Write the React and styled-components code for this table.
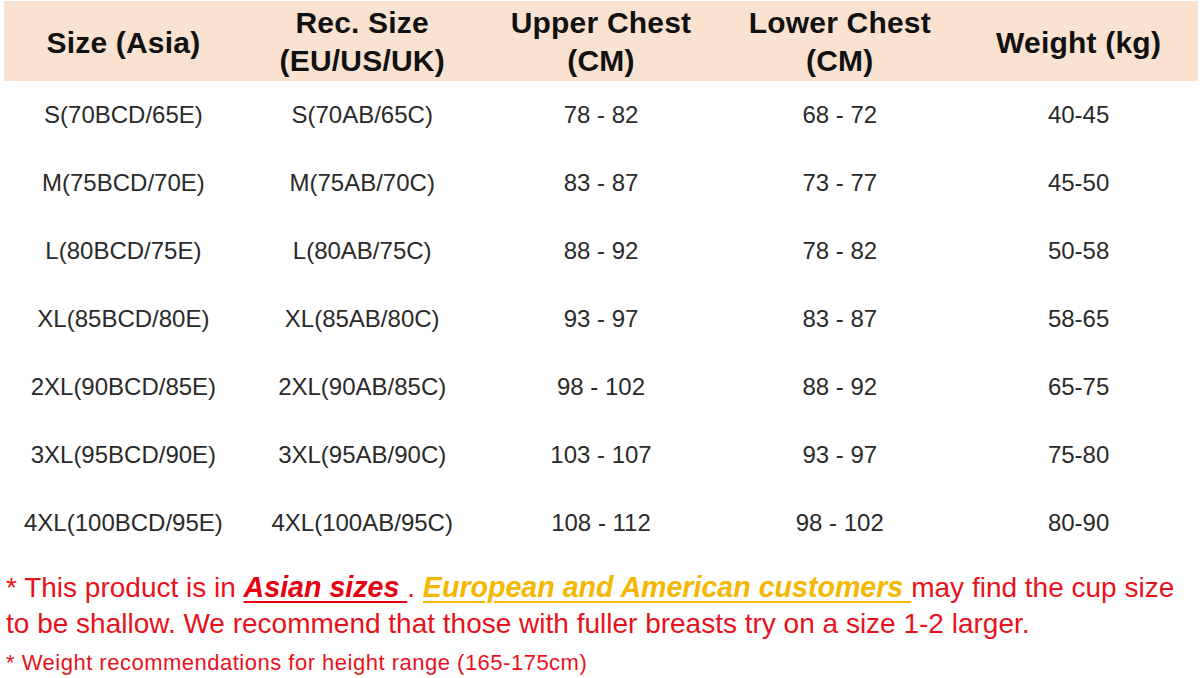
import React from 'react';
import styled, { createGlobalStyle } from 'styled-components';

const GlobalStyle = createGlobalStyle`
  html, body { margin:0; padding:0; background:#fff; }
  body { font-family:"Liberation Sans", Arial, sans-serif; }
`;

const Page = styled.div`
  width:1200px;
  height:678px;
  overflow:hidden;
  background:#fff;
  padding:1px 2px 0 4px;
  box-sizing:border-box;
`;

const Table = styled.div`
  display:grid;
  grid-template-columns:repeat(5, 1fr);
`;

const HeadCell = styled.div`
  height:80px;
  background:#fae2d1;
  display:flex;
  align-items:center;
  justify-content:center;
  text-align:center;
  padding-top:${p => (p.two ? '2px' : '4px')};
  box-sizing:border-box;
  font-size:30px;
  line-height:38px;
  font-weight:700;
  letter-spacing:0.2px;
  color:#111;
`;

const Cell = styled.div`
  height:68px;
  display:flex;
  align-items:center;
  justify-content:center;
  font-size:24px;
  color:#2a2a2a;
`;

const Notes = styled.div`
  margin-top:12px;
  padding-left:2px;
  color:#e8121c;
`;

const Big = styled.p`
  margin:0;
  font-size:28px;
  line-height:36px;
  white-space:nowrap;
`;

const Small = styled.p`
  margin:5px 0 0;
  font-size:22px;
  letter-spacing:0.5px;
  line-height:32px;
`;

const Mark = styled.span`
  font-size:28.6px;
  font-weight:700;
  font-style:italic;
  text-decoration:underline;
  text-decoration-thickness:2px;
  text-underline-offset:4px;
  color:${p => p.color};
`;

const headers = [
  ['Size (Asia)'],
  ['Rec. Size', '(EU/US/UK)'],
  ['Upper Chest', '(CM)'],
  ['Lower Chest', '(CM)'],
  ['Weight (kg)'],
];

const rows = [
  ['S(70BCD/65E)', 'S(70AB/65C)', '78 - 82', '68 - 72', '40-45'],
  ['M(75BCD/70E)', 'M(75AB/70C)', '83 - 87', '73 - 77', '45-50'],
  ['L(80BCD/75E)', 'L(80AB/75C)', '88 - 92', '78 - 82', '50-58'],
  ['XL(85BCD/80E)', 'XL(85AB/80C)', '93 - 97', '83 - 87', '58-65'],
  ['2XL(90BCD/85E)', '2XL(90AB/85C)', '98 - 102', '88 - 92', '65-75'],
  ['3XL(95BCD/90E)', '3XL(95AB/90C)', '103 - 107', '93 - 97', '75-80'],
  ['4XL(100BCD/95E)', '4XL(100AB/95C)', '108 - 112', '98 - 102', '80-90'],
];

export default function App() {
  return (
    <Page>
      <GlobalStyle />
      <Table>
        {headers.map((h, i) => (
          <HeadCell key={i} two={h.length > 1}>
            <div>
              {h.map((line, j) => (
                <div key={j}>{line}</div>
              ))}
            </div>
          </HeadCell>
        ))}
        {rows.map((r, i) =>
          r.map((c, j) => <Cell key={i + '-' + j}>{c}</Cell>)
        )}
      </Table>
      <Notes>
        <Big>
          * This product is in <Mark color="#e60012">Asian sizes </Mark>.{' '}
          <Mark color="#f5b800">European and American customers </Mark> may find the cup size
          <br />
          to be shallow. We recommend that those with fuller breasts try on a size 1-2 larger.
        </Big>
        <Small>* Weight recommendations for height range (165-175cm)</Small>
      </Notes>
    </Page>
  );
}
